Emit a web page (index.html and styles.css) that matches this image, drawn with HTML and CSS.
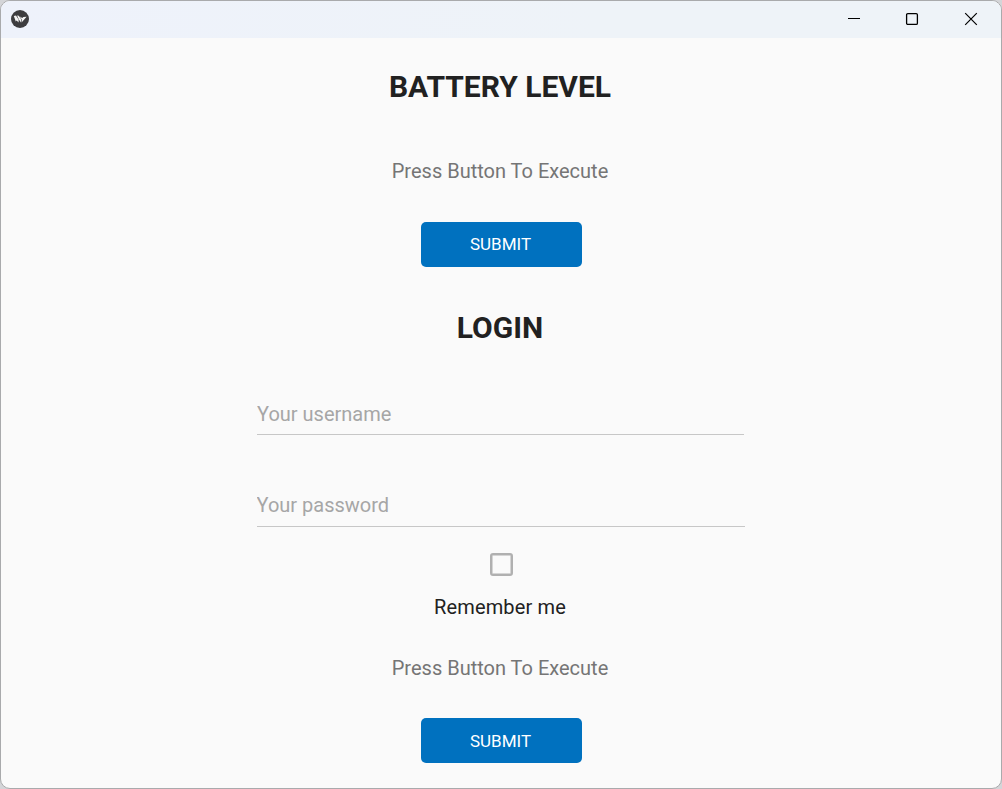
FILE: index.html
```html
<!DOCTYPE html>
<html lang="en">
<head>
<meta charset="utf-8">
<title>Battery Level</title>
<link rel="stylesheet" href="styles.css">
</head>
<body>
<div class="window">
  <header class="titlebar">
    <svg class="app-icon" width="18" height="18" viewBox="0 0 18 18"><circle cx="9" cy="9" r="9" fill="#3d3d3f"/><path d="M2.8 6L5 5.6L7.6 9.6V12.4L5.6 10.6L4.8 11.6ZM6 5.6L7.8 5.8L10 9V12.6L7.9 9.4ZM8.8 6.6L11.2 8L12.4 7L15.6 6.8L10.6 12.4V9.2Z" fill="#f4f4f4"/></svg>
    <div class="controls">
      <svg width="14" height="14" viewBox="0 0 14 14"><path d="M1 6.5H13" stroke="#000"/></svg>
      <svg width="14" height="14" viewBox="0 0 14 14"><rect x="1.6" y="1.6" width="10.8" height="10.8" rx="1.2" fill="none" stroke="#000" stroke-width="1.3"/></svg>
      <svg width="14" height="14" viewBox="0 0 14 14"><path d="M1.2 1.2L12.8 12.8M12.8 1.2L1.2 12.8" stroke="#000" stroke-width="1.2"/></svg>
    </div>
  </header>
  <main class="content">
    <section class="panel battery">
      <h1 class="heading">BATTERY LEVEL</h1>
      <p class="status">Press Button To Execute</p>
      <button class="submit">SUBMIT</button>
    </section>
    <form class="panel login">
      <h1 class="heading">LOGIN</h1>
      <input class="field" type="text" placeholder="Your username">
      <input class="field field-password" type="password" placeholder="Your password">
      <label class="remember"><input class="checkbox" type="checkbox">Remember me</label>
      <p class="status">Press Button To Execute</p>
      <button class="submit" type="button">SUBMIT</button>
    </form>
  </main>
</div>
</body>
</html>
```
FILE: styles.css
```css
* { box-sizing: border-box; }
body {
  margin: 0;
  height: 789px;
  overflow: hidden;
  background: #d4d5d8;
  font-family: Roboto, "Liberation Sans", sans-serif;
}
.window {
  height: 789px;
  border: 1px solid #a9aaac;
  border-radius: 10px;
  overflow: hidden;
  background: #fafafa;
}
.titlebar {
  display: flex;
  align-items: center;
  justify-content: space-between;
  height: 37px;
  padding: 0 23px 1px 10px;
  background: linear-gradient(90deg, #eef2fb, #eef3f8 60%);
}
.app-icon { display: block; }
.controls { display: flex; gap: 44px; }
.controls svg { display: block; }
.controls svg:last-child { margin-left: 1px; }
.content { padding: 31px 2px 0 0; }
.panel {
  display: flex;
  flex-direction: column;
  align-items: center;
}
.login { margin-top: 43.5px; }
.heading {
  margin: 0;
  font-size: 30px;
  font-weight: 700;
  line-height: 36px;
  color: #212121;
}
.status {
  margin: 54px 0 0;
  font-size: 20px;
  line-height: 24px;
  color: #757575;
}
.submit {
  width: 161px;
  height: 45px;
  margin: 38.5px 0 0 2px;
  padding: 0 1px 0 0;
  border: 0;
  border-radius: 5px;
  background: #0071bf;
  color: #fff;
  font: 400 17px/20px Roboto, "Liberation Sans", sans-serif;
}
.field {
  width: 487px;
  height: 33px;
  margin-top: 56px;
  padding: 0 0 8px 0.5px;
  border: 0;
  border-bottom: 1px solid #c7c7c7;
  border-radius: 0;
  background: transparent;
  font: 400 20px/24px Roboto, "Liberation Sans", sans-serif;
  outline: none;
}
.field::placeholder { color: #a6a6a6; opacity: 1; }
.field-password {
  width: 488px;
  height: 34px;
  margin: 58px 0 0 1px;
  padding: 0 0 9px;
}
.remember {
  display: flex;
  flex-direction: column;
  align-items: center;
  gap: 19px;
  margin-top: 26px;
  font-size: 20px;
  line-height: 24px;
  letter-spacing: 0.15px;
  color: #212121;
}
.checkbox {
  appearance: none;
  width: 23px;
  height: 23px;
  margin: 0 0 0 3px;
  border: 2px solid #b0b0b0;
  border-radius: 3px;
  box-shadow: inset 0 0 0 0.5px #b0b0b0;
}
.login .status { margin-top: 37px; }
.login .submit { margin-top: 38px; }
```
